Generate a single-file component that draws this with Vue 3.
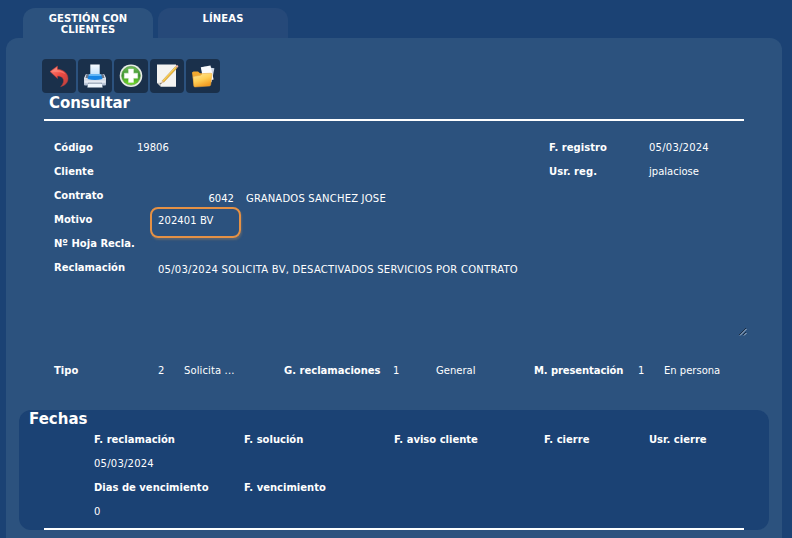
<script setup>
const dates = [
  { label: 'F. reclamación', value: '05/03/2024' },
  { label: 'F. solución', value: '' },
  { label: 'F. aviso cliente', value: '' },
  { label: 'F. cierre', value: '' },
  { label: 'Usr. cierre', value: '' },
  { label: 'Dias de vencimiento', value: '0' },
  { label: 'F. vencimiento', value: '' },
]
</script>

<template>
  <div class="page">
    <nav class="tabs">
      <a class="tab active">GESTIÓN CON<br>CLIENTES</a>
      <a class="tab">LÍNEAS</a>
    </nav>
    <main class="panel">
      <div class="toolbar">
        <button class="tool" aria-label="Volver">
          <svg viewBox="0 0 34 34">
            <defs><linearGradient id="red" x1="0" y1="0" x2="1" y2="1"><stop offset="0" stop-color="#ff8a7c" /><stop offset=".5" stop-color="#ee4a42" /><stop offset="1" stop-color="#b54040" /></linearGradient></defs>
            <path d="M8 12.500 15.500 7v3.200c6 .4 10.500 4.200 10.500 9.300 0 4-2.600 6.800-7.300 8.200 2.500-2.800 3.400-5.300 2.600-7.500-.8-2-2.700-3.100-5.800-3.200v2.600Z" fill="url(#red)" stroke="#b63c38" stroke-width=".5" />
            <path d="m9.500 12.500 5.500-3.800V11c4 .3 7 1.800 8.500 4.300-2.300-1.600-5-2.200-8.500-2Z" fill="#ff9b8c" opacity=".5" />
          </svg>
        </button>
        <button class="tool" aria-label="Imprimir">
          <svg viewBox="0 0 34 34">
            <defs>
              <linearGradient id="paper" x1="0" y1="0" x2="0" y2="1"><stop offset="0" stop-color="#f8fcff" /><stop offset="1" stop-color="#bfe0fa" /></linearGradient>
              <linearGradient id="body" x1="0" y1="0" x2="0" y2="1"><stop offset="0" stop-color="#f7f8fb" /><stop offset="1" stop-color="#aebbcf" /></linearGradient>
            </defs>
            <path d="M8 15h18l2 4v6.500q0 1-1 1H7q-1 0-1-1V19Z" fill="url(#body)" />
            <path d="M8.500 15h3v4h-4ZM22.500 15h3l1 4h-4Z" fill="#69758a" />
            <path d="M12.300 5.500h9.400v11h-9.400Z" fill="url(#paper)" />
            <path d="M11 15.500h12l1.500 4.500q-7.500 2-15 0Z" fill="#1685e5" />
            <path d="M11 15.500h12l.6 1.500H10.500Z" fill="#5eb5f6" />
            <path d="M6.500 21.500h21v2.300h-21Z" fill="#e4e9f1" />
            <path d="M10 23.800h14V25H10Z" fill="#63728a" />
            <path d="M10.300 24.500h13.400l1 4H9.300Z" fill="#eef5fc" />
          </svg>
        </button>
        <button class="tool" aria-label="Añadir">
          <svg viewBox="0 0 34 34">
            <defs><linearGradient id="green" x1="0" y1="0" x2="0" y2="1"><stop offset="0" stop-color="#72bd59" /><stop offset=".48" stop-color="#39932b" /><stop offset="1" stop-color="#76df28" /></linearGradient></defs>
            <circle cx="17" cy="16.700" r="11.300" fill="#e9eee6" />
            <circle cx="17" cy="16.700" r="9.400" fill="url(#green)" stroke="#568d49" stroke-width=".6" />
            <path d="M14.500 10h5v4.200h4.200v5h-4.200v4.200h-5v-4.200h-4.200v-5h4.200Z" fill="#fff" stroke="#e0eedb" stroke-width=".5" />
          </svg>
        </button>
        <button class="tool" aria-label="Editar">
          <svg viewBox="0 0 34 34">
            <path d="M7 5.500h19v22.300H11l-4-4Z" fill="#f4f4f2" />
            <path d="m7 23.800 4 4v-4Z" fill="#c9c9c6" />
            <path d="m12.500 22.800 14-14.300" stroke="#9f8770" stroke-width="2.500" opacity=".25" />
            <path d="M12.300 21.700 25.500 7.400l1.600 1.500-13.300 14.300Z" fill="#edb938" stroke="#b88934" stroke-width=".4" />
            <path d="m13 21.800 13-14" stroke="#ffe47d" stroke-width=".7" />
            <path d="m12.300 21.700 1.500 1.500-3.800 2.100Z" fill="#d9b999" />
            <path d="m10.900 23.700.7.700-1.600.9Z" fill="#444" />
            <path d="m25.500 7.400 1.200-1.300q1.500-.1 1.700 1.500l-1.300 1.300Z" fill="#ebb5a0" />
          </svg>
        </button>
        <button class="tool" aria-label="Documentos">
          <svg viewBox="0 0 34 34">
            <defs><linearGradient id="folder" x1="0" y1="0" x2=".5" y2="1"><stop offset="0" stop-color="#ffe9a0" /><stop offset=".55" stop-color="#ffcf55" /><stop offset="1" stop-color="#f39b21" /></linearGradient></defs>
            <path d="M6 13.500 7.500 12.500h4.500l2 1.800h9V25L8 27Z" fill="#f3aa30" />
            <path d="m18.500 7.800 9.900 1.500-2.800 14-10-2Z" fill="#ced7e3" />
            <path d="m14.800 8.300 9.700-1.800 3.100 14-10 2Z" fill="#fafbfd" />
            <path d="m7 17.500 7.500-1.200 2-1.700 8.500-.4q1 0 .9 1l-1.200 10.600q-.1 1-1.200 1.200L9 28q-1 0-1.200-1Z" fill="url(#folder)" stroke="#e7a33a" stroke-width=".5" />
          </svg>
        </button>
      </div>
      <h1>Consultar</h1>
      <section class="record">
        <dl class="fields">
          <div class="field"><dt>Código</dt><dd>19806</dd></div>
          <div class="field"><dt>Cliente</dt><dd></dd></div>
          <div class="field contract"><dt>Contrato</dt><dd><span>6042</span><span class="name">GRANADOS SANCHEZ JOSE</span></dd></div>
          <div class="field reason"><dt>Motivo</dt><dd><span class="marked">202401 BV</span></dd></div>
          <div class="field"><dt>Nº Hoja Recla.</dt><dd></dd></div>
          <div class="field claim"><dt>Reclamación</dt><dd>05/03/2024 SOLICITA BV, DESACTIVADOS SERVICIOS POR CONTRATO</dd></div>
        </dl>
        <dl class="registry">
          <div class="field"><dt>F. registro</dt><dd class="date">05/03/2024</dd></div>
          <div class="field"><dt>Usr. reg.</dt><dd>jpalaciose</dd></div>
        </dl>
        <svg class="grip" viewBox="0 0 8 8"><path d="m0 7 7-7M4 7l3-3" stroke="#1b2c42" /><path d="m1 7.500 6.500-6.500M5 7.500 7.500 5" stroke="#d3dbe5" stroke-width=".8" /></svg>
      </section>
      <div class="summary">
        <b>Tipo</b><span>2</span><span class="kind">Solicita ...</span>
        <b>G. reclamaciones</b><span>1</span><span>General</span>
        <b class="presentation">M. presentación</b><span>1</span><span>En persona</span>
      </div>
      <section class="dates">
        <h2>Fechas</h2>
        <dl class="date-grid">
          <div v-for="date in dates" :key="date.label"><dt>{{ date.label }}</dt><dd class="date">{{ date.value }}</dd></div>
        </dl>
        <hr>
      </section>
    </main>
  </div>
</template>

<style>
body { margin: 0; background: #1b4274; overflow: hidden; }
</style>
<style scoped>
* { box-sizing: border-box; }
.page { width: 792px; height: 538px; padding: 8px 10px 0 6px; overflow: hidden; background: #1b4274; color: #fff; font: 10px/24px Verdana, "DejaVu Sans", sans-serif; }
.tabs { display: flex; gap: 5px; height: 30px; padding-left: 17px; }
.tab { width: 130px; padding-top: 5px; border-radius: 12px 12px 0 0; background: #264979; text-align: center; font-weight: 700; line-height: 11px; letter-spacing: .12px; }
.tab.active { background: #2c527e; }
.panel { height: 500px; padding-top: 21px; border-radius: 12px 12px 0 0; background: #2c527e; }
.toolbar { display: flex; gap: 2px; height: 34px; padding-left: 36px; }
.tool { width: 34px; height: 34px; padding: 0; border: 0; border-radius: 4px; background: #1a304b; }
.tool svg { display: block; width: 34px; height: 34px; }
h1, h2, dl, dd { margin: 0; }
h1 { width: 700px; height: 28px; margin-left: 38px; padding-left: 5px; border-bottom: 2px solid #fff; font-size: 15px; line-height: 21px; letter-spacing: -.06px; }
dt, b { font-weight: 700; white-space: nowrap; }
dd { white-space: nowrap; }
.record { position: relative; display: grid; grid-template-columns: 495px 1fr; height: 238px; padding: 15px 0 0 48px; }
.field { display: flex; height: 24px; }
.fields dt { width: 83px; flex: none; }
.date { letter-spacing: .23px; }
.contract dd { display: flex; gap: 12px; padding: 3px 0 0 71.500px; }
.name { letter-spacing: .2px; }
.reason dd { padding-left: 13px; margin-top: -1px; }
.marked { display: block; width: 91px; height: 31px; padding-left: 6px; border: 2px solid #e59145; border-radius: 8px; box-shadow: 1px 2px 2px #6f6d6caa; line-height: 23px; letter-spacing: .08px; }
.claim dd { padding: 2px 0 0 21px; letter-spacing: .25px; }
.registry dt { width: 100px; letter-spacing: .05px; }
.grip { position: absolute; left: 733px; bottom: 23px; width: 8px; height: 8px; }
.summary { display: grid; grid-template-columns: 104px 26px 100px 109px 43px 98px 104px 26px 1fr; padding-left: 48px; height: 51px; }
.kind { letter-spacing: .12px; }
.presentation { letter-spacing: -.1px; }
.dates { width: 750px; height: 120px; margin-left: 13px; border-radius: 12px; background: #1b4274; }
h2 { height: 18px; padding-left: 10px; font-size: 15px; line-height: 18px; }
.date-grid { display: grid; grid-template-columns: 150px 150px 150px 105px 1fr; grid-auto-rows: 48px; height: 100px; padding-left: 75px; }
.date-grid dd { height: 24px; }
hr { width: 700px; height: 2px; margin: 0 0 0 25px; border: 0; background: #fff; }
</style>
